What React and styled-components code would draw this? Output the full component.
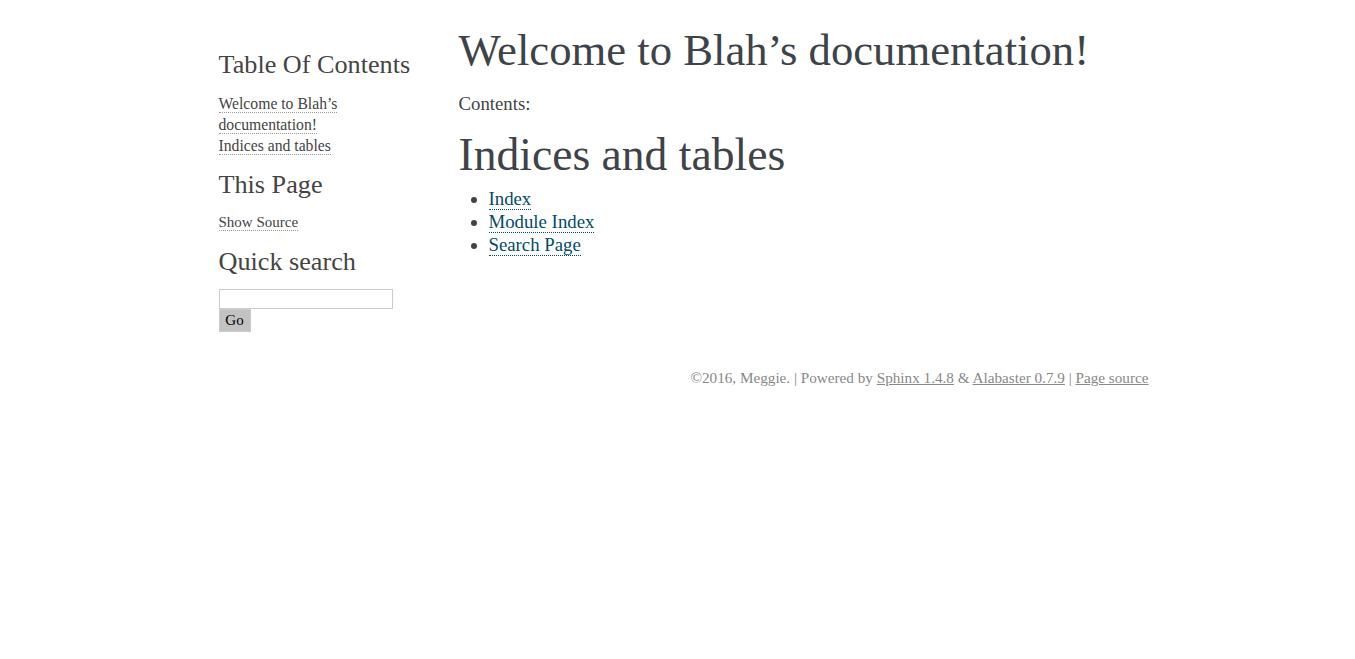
import React from "react";
import styled, { createGlobalStyle } from "styled-components";

const SERIF = `"Liberation Serif", "DejaVu Serif", serif`;

const Global = createGlobalStyle`
  html, body { margin: 0; padding: 0; background: #fff; }
  body {
    font-family: ${SERIF};
    font-size: 18.8px;
    color: #3E4349;
    line-height: 1.4;
  }
`;

const Document = styled.div`
  width: 940px;
  margin: 30px auto 0 auto;
  display: flex;
  align-items: flex-start;
`;

const Sidebar = styled.div`
  width: 220px;
  box-sizing: border-box;
  padding: 18px 10px 18px 11px;
  font-size: 15.7px;
  line-height: 21px;
  flex: none;
`;

const SideHeading = styled.h3`
  font-family: ${SERIF};
  color: #444;
  font-size: 26.2px;
  font-weight: normal;
  margin: 0;
  padding: 0;
  line-height: 33px;
`;

const SideList = styled.ul`
  list-style: none;
  margin: ${(p) => p.$top || "12px"} 0 12px 0;
  padding: 0;
  color: #000;
  font-size: ${(p) => p.$size || "15.7px"};
  line-height: 21px;
`;

const SideLink = styled.a`
  color: #444;
  text-decoration: none;
  border-bottom: 1px dotted #999;
`;

const SearchForm = styled.form`
  margin: 11px 0 0 0;
  display: flex;
  flex-direction: column;
  align-items: flex-start;
`;

const SearchInput = styled.input`
  width: 174px;
  height: 20px;
  box-sizing: border-box;
  border: 1px solid #ccc;
  font-family: inherit;
  font-size: 15px;
  margin: 0;
  padding: 0 3px;
  outline: none;
`;

const GoButton = styled.button`
  background: #c2c2c2;
  border: 1px solid #cbcbcb;
  font-family: ${SERIF};
  font-size: 15px;
  line-height: 1;
  color: #000;
  width: 32px;
  height: 23px;
  padding: 0;
  margin: 0;
`;

const Body = styled.div`
  flex: 1;
  padding: 0 30px 0 31px;
`;

const H1 = styled.h1`
  font-family: ${SERIF};
  font-weight: normal;
  font-size: 44.7px;
  margin: 0 0 21px 0;
  padding: 0;
  line-height: 40px;
`;

const H2 = styled.h2`
  font-family: ${SERIF};
  font-weight: normal;
  font-size: 45.6px;
  margin: 13px 0 7px 0;
  padding: 0;
  line-height: 50px;
`;

const Caption = styled.p`
  margin: 0;
  font-size: 18.8px;
  line-height: 26px;
`;

const MainList = styled.ul`
  margin: 7px 0 10px 30px;
  padding: 0;
  line-height: 23px;
`;

const MainLink = styled.a`
  color: #004B6B;
  text-decoration: none;
  border-bottom: 1px dotted #004B6B;
`;

const Footer = styled.div`
  width: 940px;
  padding-left: 2px;
  margin: 17px auto 30px auto;
  font-size: 15.2px;
  color: #888;
  text-align: right;
`;

const FootLink = styled.a`
  color: #888;
  text-decoration: underline;
`;

export default function App() {
  return (
    <>
      <Global />
      <Document>
        <Sidebar>
          <SideHeading>Table Of Contents</SideHeading>
          <SideList>
            <li><SideLink href="#">Welcome to Blah’s documentation!</SideLink></li>
            <li><SideLink href="#">Indices and tables</SideLink></li>
          </SideList>
          <SideHeading>This Page</SideHeading>
          <SideList $size="15px" $top="11px">
            <li><SideLink href="#">Show Source</SideLink></li>
          </SideList>
          <SideHeading>Quick search</SideHeading>
          <SearchForm onSubmit={(e) => e.preventDefault()}>
            <SearchInput type="text" />
            <GoButton type="submit">Go</GoButton>
          </SearchForm>
        </Sidebar>
        <Body>
          <H1>Welcome to Blah’s documentation!</H1>
          <Caption>Contents:</Caption>
          <H2>Indices and tables</H2>
          <MainList>
            <li><MainLink href="#">Index</MainLink></li>
            <li><MainLink href="#">Module Index</MainLink></li>
            <li><MainLink href="#">Search Page</MainLink></li>
          </MainList>
        </Body>
      </Document>
      <Footer>
        ©2016, Meggie. | Powered by <FootLink href="#">Sphinx 1.4.8</FootLink> &amp; <FootLink href="#">Alabaster 0.7.9</FootLink> | <FootLink href="#">Page source</FootLink>
      </Footer>
    </>
  );
}
